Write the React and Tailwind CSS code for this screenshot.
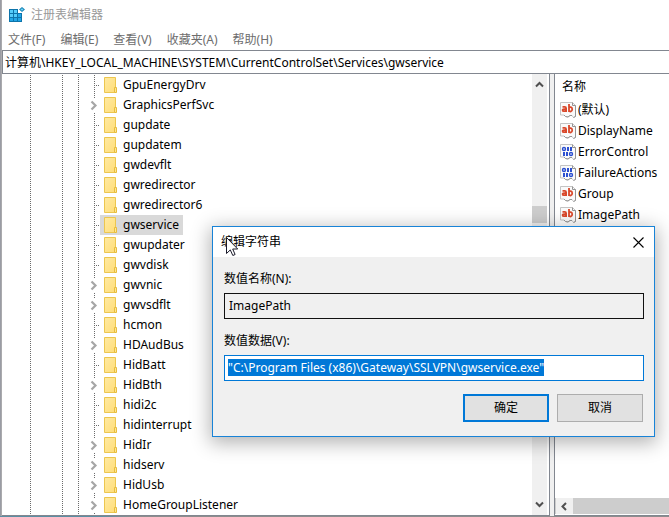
import { useEffect, useRef, useState } from 'react';

const services = [
  { name: 'GpuEnergyDrv' },
  { name: 'GraphicsPerfSvc', children: true },
  { name: 'gupdate' },
  { name: 'gupdatem' },
  { name: 'gwdevflt' },
  { name: 'gwredirector' },
  { name: 'gwredirector6' },
  { name: 'gwservice' },
  { name: 'gwupdater' },
  { name: 'gwvdisk' },
  { name: 'gwvnic', children: true },
  { name: 'gwvsdflt', children: true },
  { name: 'hcmon' },
  { name: 'HDAudBus', children: true },
  { name: 'HidBatt' },
  { name: 'HidBth', children: true },
  { name: 'hidi2c' },
  { name: 'hidinterrupt' },
  { name: 'HidIr', children: true },
  { name: 'hidserv', children: true },
  { name: 'HidUsb', children: true },
  { name: 'HomeGroupListener', children: true },
];

const values = [
  { name: '(默认)', type: 'string' },
  { name: 'DisplayName', type: 'string' },
  { name: 'ErrorControl', type: 'binary' },
  { name: 'FailureActions', type: 'binary' },
  { name: 'Group', type: 'string' },
  { name: 'ImagePath', type: 'string' },
];

const menus = ['文件(F)', '编辑(E)', '查看(V)', '收藏夹(A)', '帮助(H)'];

const AppIcon = () => (
  <svg width="16" height="16" viewBox="0 0 16 16" aria-hidden="true">
    <path d="M0 2h9v4h4v9H0z" fill="#0d74ab" />
    <path d="M1 3h3v3H1zM5 3h3v3H5zM1 7h3v3H1zM5 7h3v3H5z" fill="#55ccfa" />
    <path d="M9 7h3v3H9zM1 11h3v3H1zM5 11h3v3H5zM9 11h3v3H9z" fill="#22a6e6" />
    <path d="M13 0l3 2.500-3 2.500-3-2.500z" fill="#1583b5" />
    <path d="M13 1.200l1.500 1.300L13 3.800l-1.500-1.300z" fill="#6fd0f5" />
  </svg>
);

const FolderIcon = () => (
  <svg width="13" height="16" viewBox="0 0 13 16" aria-hidden="true">
    <defs>
      <linearGradient id="folder" x1="0" y1="0" x2="1" y2="1">
        <stop offset="0" stopColor="#ffeaa2" />
        <stop offset="1" stopColor="#ffdd78" />
      </linearGradient>
    </defs>
    <path d="M.5.5h11v15H.5z" fill="url(#folder)" stroke="#ecc64f" />
    <path d="M10.500 10.500h2v5h-2z" fill="#ffe694" stroke="#e8bd3c" />
  </svg>
);

// Dotted branch leading to a node, with an expander when it has subkeys
const Branch = ({ expandable }) => (
  <svg width="12" height="20" viewBox="0 0 12 20" fill="none" aria-hidden="true">
    {expandable ? (
      <>
        <path d="M6.500 0v3M6.500 18v2" stroke="#6b6b6b" strokeDasharray="1 1" />
        <path d="M3.500 6.500L7.500 10.500L3.500 14.500" stroke="#a6a6a6" strokeWidth="2.200" />
      </>
    ) : (
      <path d="M6.500 0v20M8 10.500h4" stroke="#6b6b6b" strokeDasharray="1 1" />
    )}
  </svg>
);

const Guide = ({ className }) => (
  <span className={`h-5 ${className}`}>
    <svg className="block" width="1" height="20" aria-hidden="true">
      <path d="M.5 0v20" stroke="#6b6b6b" strokeDasharray="1 1" />
    </svg>
  </span>
);

const ValueIcon = ({ type }) => (
  <svg width="16" height="16" viewBox="0 0 16 16" fill="none" aria-hidden="true">
    <path d="M.5.5h12l3 3v11l-2 1-1.500-2-2 0-2 1.500-2.500-.5-1.500-1.500H.5z" fill="#fafafa" stroke="#c4c4c4" />
    <path d="M12.500.5v3h3v11l-2 1M12 13.500h-2l-2 1.500-2.500-.5-1.500-1.500" stroke="#959595" />
    {type === 'string' ? (
      <g stroke="#d9482b" strokeWidth="1.800">
        <path d="M2.500 4.900h2.200c1 0 1.400.5 1.400 1.300V10M6 7.200H3.900c-1.700 0-1.700 2 0 2 1.200 0 2.100-.6 2.100-1.400" />
        <path d="M9 2v8M9 5.900c.8-1.200 3.200-1.300 3.200 1.300S9.800 10 9 8.800" />
      </g>
    ) : (
      <>
        <path d="M7 3h2v4H7zM10 3h2v4h-2zM3 8h2v4H3zM6 8h2v4H6z" fill="#2b4fd0" />
        <circle cx="4" cy="5" r="1.500" stroke="#2b4fd0" strokeWidth="1.400" />
        <circle cx="11" cy="10" r="1.500" stroke="#2b4fd0" strokeWidth="1.400" />
      </>
    )}
  </svg>
);

const Arrow = ({ d }) => (
  <svg width="9" height="9" viewBox="0 0 9 9" fill="none" aria-hidden="true">
    <path d={d} stroke="#505050" strokeWidth="2" />
  </svg>
);

const KeyTree = ({ selected, onSelect }) => (
  <ul className="pt-px">
    {services.map((item) => (
      <li key={item.name} className="flex h-5 pl-7">
        <Guide className="w-8" />
        <Guide className="w-4" />
        <Guide className="w-[10px]" />
        <Branch expandable={item.children} />
        <button
          type="button"
          onClick={() => onSelect(item.name)}
          className={`flex items-center gap-[6px] px-1 ${selected === item.name ? 'bg-[#d9d9d9]' : ''}`}
        >
          <FolderIcon />
          {item.name}
        </button>
      </li>
    ))}
  </ul>
);

const EditDialog = () => {
  const [data, setData] = useState('"C:\\Program Files (x86)\\Gateway\\SSLVPN\\gwservice.exe"');
  const dataRef = useRef(null);

  // The value is preselected so that typing replaces it
  useEffect(() => {
    dataRef.current.focus();
    dataRef.current.select();
  }, []);

  return (
    <div
      role="dialog"
      aria-labelledby="dialog-title"
      className="absolute left-[212px] top-[226px] w-[443px] border border-[#1883d7] bg-[#f0f0f0] shadow-[0_4px_18px_2px_rgba(0,0,0,0.3)]"
    >
      <div className="flex h-[30px] items-center justify-between bg-white pl-2 pr-[10px]">
        <h2 id="dialog-title">编辑字符串</h2>
        <button type="button" aria-label="关闭">
          <svg width="11" height="11" viewBox="0 0 11 11" aria-hidden="true">
            <path d="M.5.5l10 10M10.500.5l-10 10" stroke="#000" strokeWidth="1.100" />
          </svg>
        </button>
      </div>
      <form className="pb-[14px] pl-[11px] pr-[10px] pt-3" onSubmit={(e) => e.preventDefault()}>
        <label htmlFor="value-name" className="block h-6 leading-5">数值名称(N):</label>
        <input
          id="value-name"
          readOnly
          value="ImagePath"
          className="mb-3 block h-[26px] w-full border border-[#111] bg-[#f0f0f0] px-1 pb-[2px] outline-none"
        />
        <label htmlFor="value-data" className="block h-6 leading-5">数值数据(V):</label>
        <input
          id="value-data"
          ref={dataRef}
          value={data}
          onChange={(e) => setData(e.target.value)}
          className="block h-[26px] w-full border border-[#0078d7] bg-white px-[3px] pb-[2px] outline-none selection:bg-[#0078d7] selection:text-white"
        />
        <div className="mt-[13px] flex justify-end gap-2 pr-px">
          <button type="submit" className="h-7 w-[86px] border-2 border-[#0078d7] bg-[#e1e1e1]">确定</button>
          <button type="button" className="h-7 w-[86px] border border-[#adadad] bg-[#e1e1e1]">取消</button>
        </div>
      </form>
    </div>
  );
};

export default function App() {
  const [selected, setSelected] = useState('gwservice');

  return (
    <div className="relative flex min-h-screen flex-col overflow-hidden bg-[#9a9ca4] font-['Noto_Sans','Noto_Sans_CJK_SC',sans-serif] text-[12px] leading-4 text-black">
      <div className="ml-px flex flex-1 flex-col border-l border-[#aaaaad] bg-white">
        <header className="flex h-[30px] items-center gap-[6px] pl-[7px] text-[#999]">
          <AppIcon />
          <h1>注册表编辑器</h1>
        </header>
        <nav className="flex h-5 gap-[15px] pl-[6px] text-[#6d6d6d]">
          {menus.map((menu) => (
            <button key={menu} type="button">{menu}</button>
          ))}
        </nav>
        <input
          aria-label="地址"
          defaultValue="计算机\HKEY_LOCAL_MACHINE\SYSTEM\CurrentControlSet\Services\gwservice"
          className="h-6 border border-r-0 border-[#828790] bg-white pl-[2px] outline-none"
        />

        <main className="flex flex-1">
          <section className="flex flex-1 justify-between border-b border-r border-[#828790] pr-[2px]">
            <KeyTree selected={selected} onSelect={setSelected} />
            <div className="flex w-[15px] flex-col items-center justify-between bg-[#f0f0f0] py-[6px]">
              <Arrow d="M1 6.500L4.500 3L8 6.500" />
              <div className="mb-[161px] h-[17px] w-full bg-[#cdcdcd]" />
              <Arrow d="M1 2.500L4.500 6L8 2.500" />
            </div>
          </section>
          <div className="w-1 bg-[#f0f0f0]" />
          <section className="flex w-[115px] flex-col justify-between border-b border-l border-[#828790]">
            <div>
              <h2 className="h-[25px] pl-[7px] leading-[26px]">名称</h2>
              <ul>
                {values.map((value) => (
                  <li key={value.name} className="flex h-[21px] items-center gap-[2px] pl-[5px]">
                    <ValueIcon type={value.type} />
                    {value.name}
                  </li>
                ))}
              </ul>
            </div>
            <div className="mb-px flex h-4 items-center bg-[#cdcdcd] pl-px">
              <div className="flex h-4 w-[17px] items-center justify-center bg-[#f0f0f0]">
                <Arrow d="M6 1L2.500 4.500L6 8" />
              </div>
            </div>
          </section>
        </main>
      </div>
      <div className="h-px bg-linear-to-r from-[#5b8fa3] from-15% to-[#8d8d8d] to-20%" />

      <EditDialog />

      <svg className="pointer-events-none absolute left-[226px] top-[237px]" width="12" height="19" viewBox="0 0 12 19" aria-hidden="true">
        <path d="M.5.5v16l3.800-3.600 2.500 5.600 2.300-1-2.400-5.500h5z" fill="#fff" stroke="#1a1a2a" />
      </svg>
    </div>
  );
}
